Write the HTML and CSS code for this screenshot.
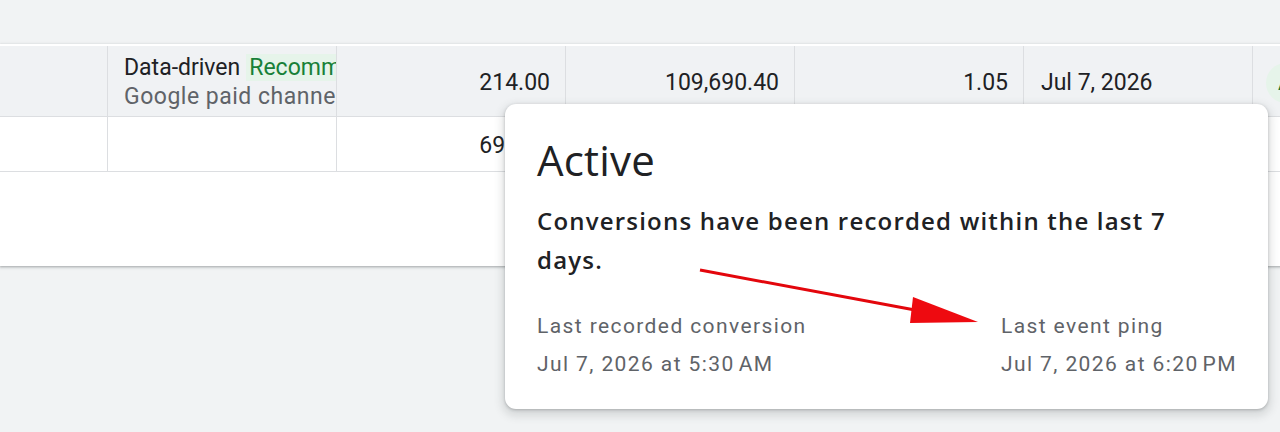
FILE: index.html
```html
<!DOCTYPE html>
<html>
<head>
<meta charset="utf-8">
<link rel="stylesheet" href="styles.css">
</head>
<body>
<div class="page">
  <div class="card">
    <div class="row row-hover">
      <div class="cell c1"></div>
      <div class="cell c2">
        <div class="line1"><span class="dark">Data-driven</span><span class="rec">Recommended</span></div>
        <div class="line2">Google paid channels</div>
      </div>
      <div class="cell num">214.00</div>
      <div class="cell num">109,690.40</div>
      <div class="cell num">1.05</div>
      <div class="cell date">Jul 7, 2026</div>
      <div class="cell status"><span class="chip">Active</span></div>
    </div>
    <div class="row row2">
      <div class="cell c1"></div>
      <div class="cell c2"></div>
      <div class="cell num">698.00</div>
      <div class="cell num"></div>
      <div class="cell num"></div>
      <div class="cell date"></div>
      <div class="cell status"></div>
    </div>
  </div>
</div>

<div class="popup">
  <h1 class="title">Active</h1>
  <p class="desc">Conversions have been recorded within the last 7 days.</p>
  <div class="meta">
    <div class="meta-col">
      <div class="label">Last recorded conversion</div>
      <div class="value">Jul 7, 2026 at 5:30&#8239;AM</div>
    </div>
    <div class="meta-col">
      <div class="label">Last event ping</div>
      <div class="value">Jul 7, 2026 at 6:20&#8239;PM</div>
    </div>
  </div>
</div>

<svg class="arrow" width="300" height="70" viewBox="0 0 300 70">
  <line x1="0" y1="0" x2="215" y2="40" stroke="#e3060c" stroke-width="3"/>
  <polygon points="213,27 210,53 278,52" fill="#ee0a10"/>
</svg>
</body>
</html>
```

FILE: styles.css
```css
html, body {
  margin: 0;
  padding: 0;
}
body {
  width: 1280px;
  height: 432px;
  overflow: hidden;
  background: #f1f3f4;
  font-family: Roboto, "Liberation Sans", sans-serif;
  position: relative;
}
.page {
  padding-top: 44px;
}
.card {
  width: 1420px;
  height: 220px;
  background: #fff;
  padding-top: 2px;
  box-shadow: 0 1px 2px rgba(60,64,67,.3), 0 1px 3px 1px rgba(60,64,67,.12);
}
.row {
  display: flex;
  border-bottom: 1px solid #dcdee1;
}
.row-hover {
  height: 70px;
  background: #f0f2f4;
}
.row2 {
  height: 54px;
}
.cell {
  box-sizing: border-box;
  border-right: 1px solid #dcdee1;
  flex: none;
  width: 229px;
  font-size: 23px;
  color: #202124;
  overflow: hidden;
  white-space: nowrap;
}
.c1 { width: 108px; }
.c2 {
  padding: 7px 0 0 16px;
  line-height: 29px;
}
.dark { color: #202124; }
.rec {
  color: #188038;
  background: #e6f4ea;
  margin-left: 6px;
  padding: 0 3px;
}
.line2 {
  color: #5f6368;
  line-height: 29px;
  letter-spacing: 0.5px;
}
.num {
  display: flex;
  align-items: center;
  justify-content: flex-end;
  padding-right: 15px;
  padding-top: 3px;
}
.date {
  display: flex;
  align-items: center;
  padding-left: 17px;
  padding-top: 3px;
}
.status {
  display: flex;
  align-items: center;
  padding-left: 13px;
  padding-top: 3px;
  border-right: none;
}
.chip {
  background: #e6f4ea;
  color: #137333;
  border-radius: 20px;
  padding: 8px 12px;
  font-size: 20px;
}

.popup {
  position: absolute;
  left: 505px;
  top: 104px;
  width: 763px;
  height: 305px;
  box-sizing: border-box;
  background: #fff;
  border-radius: 11px;
  box-shadow: 0 1px 3px rgba(60,64,67,.3), 0 4px 8px 3px rgba(60,64,67,.15);
  padding: 31px 31px 0 32px;
}
.title {
  margin: 0;
  font-family: "Open Sans", sans-serif;
  font-weight: 400;
  font-size: 42px;
  line-height: 50px;
  color: #202124;
  letter-spacing: 0.2px;
}
.desc {
  margin: 16px 0 0 0;
  font-family: "Open Sans", sans-serif;
  font-weight: 600;
  font-size: 24px;
  line-height: 39px;
  color: #202124;
  letter-spacing: 1.2px;
  width: 680px;
}
.meta {
  display: flex;
  justify-content: space-between;
  margin-top: 28px;
}
.label, .value {
  font-size: 21px;
  color: #5f6368;
  letter-spacing: 1.4px;
  line-height: 38px;
}
.arrow {
  position: absolute;
  left: 700px;
  top: 270px;
  overflow: visible;
}
```
